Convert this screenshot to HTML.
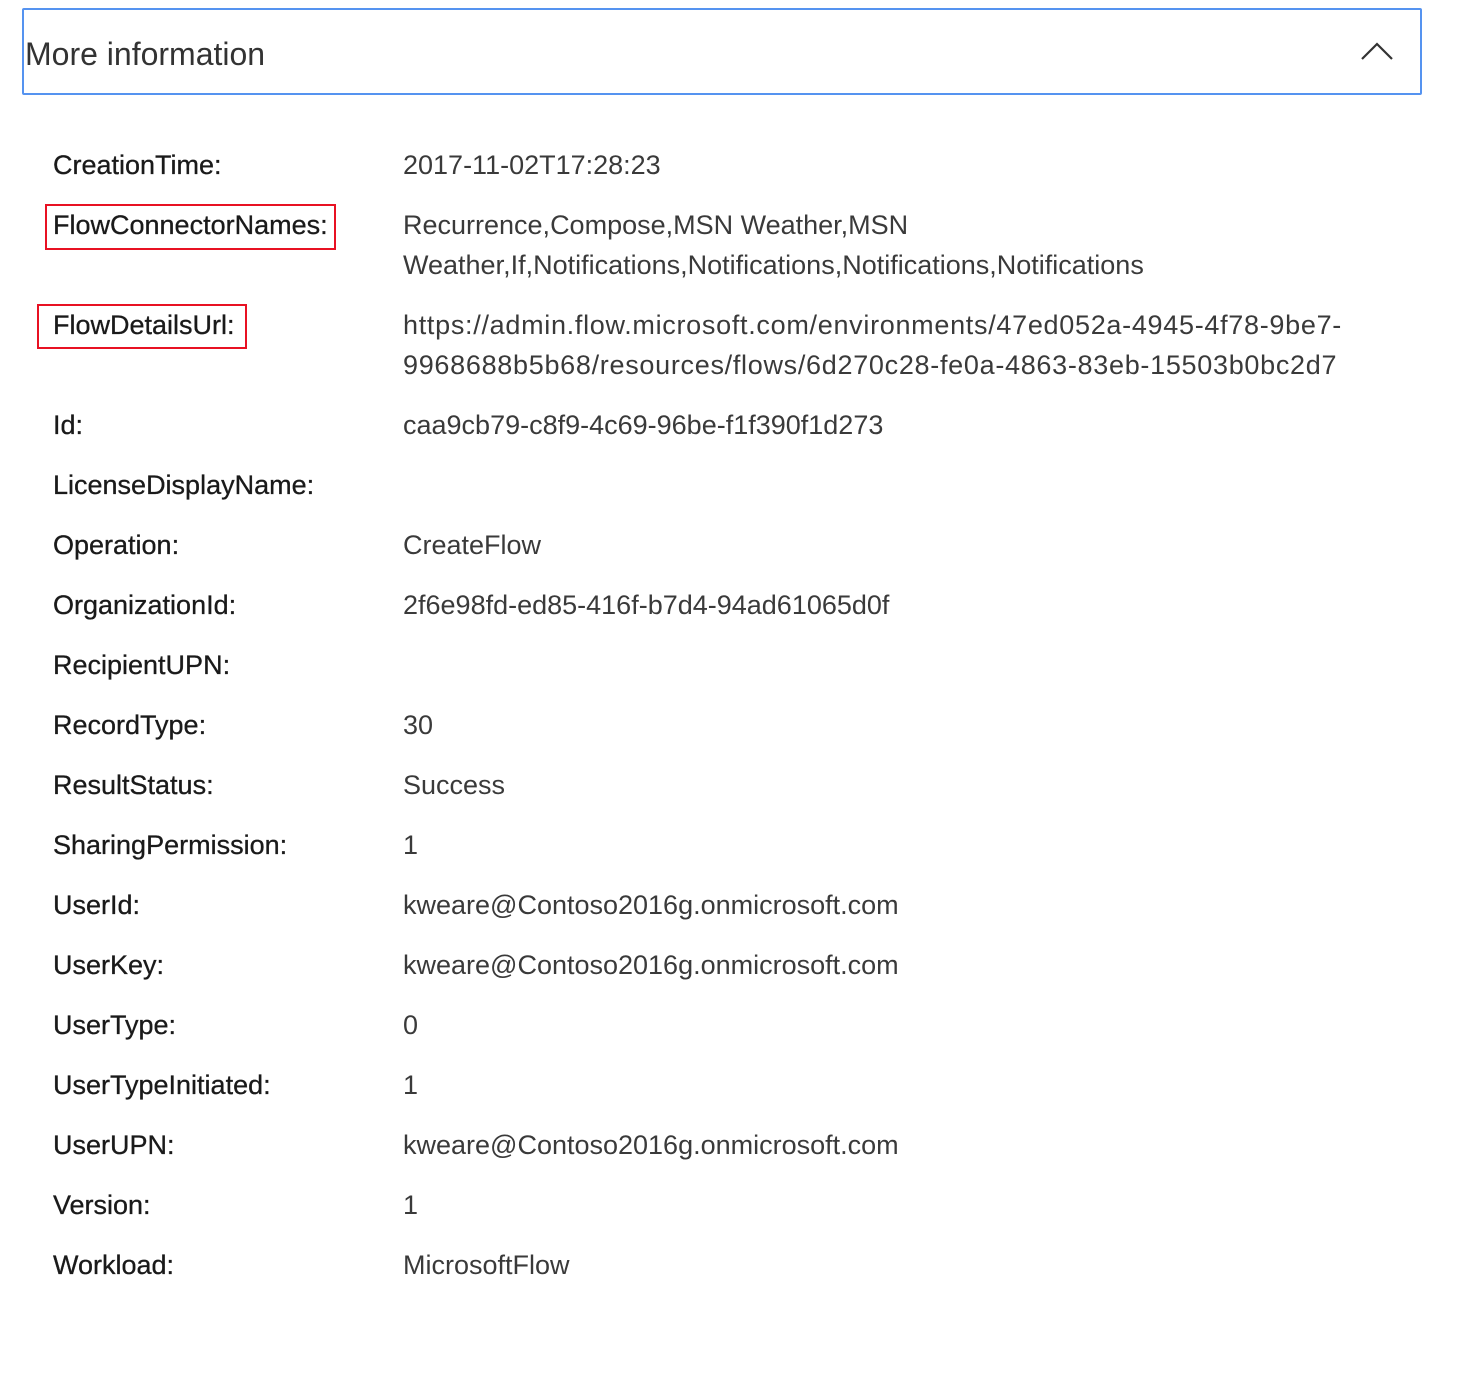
<!DOCTYPE html>
<html><head><meta charset="utf-8"><style>
html,body{margin:0;padding:0;background:#fff;width:1457px;height:1379px;overflow:hidden;position:relative;font-family:"Liberation Sans",sans-serif;}
.hdr{position:absolute;left:22px;top:8px;width:1396px;height:83px;border:2px solid #5593f0;border-radius:2px;}
.hdr span{position:absolute;left:1px;top:24px;font-size:32px;color:#333;line-height:40px;}
.r{position:absolute;line-height:40px;font-size:27px;white-space:nowrap;}
.l{left:53px;color:#1a1a1a;-webkit-text-stroke:0.3px #1a1a1a;}
.v{left:403px;color:#3a3a3a;}
.box{position:absolute;border:2.5px solid #e81123;}
</style></head><body>
<div class="hdr"><span>More information</span>
<svg style="position:absolute;left:1334px;top:30px" width="40" height="26"><polyline points="4,19 19,4 34,19" fill="none" stroke="#333" stroke-width="2.2"/></svg></div>
<div class="box" style="left:45px;top:204px;width:287px;height:42px"></div>
<div class="box" style="left:37px;top:304px;width:206px;height:41px"></div>
<div class="r l" style="top:145px">CreationTime:</div><div class="r v" style="top:145px">2017-11-02T17:28:23</div>
<div class="r l" style="top:205px">FlowConnectorNames:</div><div class="r v" style="top:205px">Recurrence,Compose,MSN Weather,MSN<br>Weather,If,Notifications,Notifications,Notifications,Notifications</div>
<div class="r l" style="top:305px">FlowDetailsUrl:</div><div class="r v" style="top:305px;letter-spacing:0.7px">https://admin.flow.microsoft.com/environments/47ed052a-4945-4f78-9be7-<br>9968688b5b68/resources/flows/6d270c28-fe0a-4863-83eb-15503b0bc2d7</div>
<div class="r l" style="top:405px">Id:</div><div class="r v" style="top:405px">caa9cb79-c8f9-4c69-96be-f1f390f1d273</div>
<div class="r l" style="top:465px">LicenseDisplayName:</div>
<div class="r l" style="top:525px">Operation:</div><div class="r v" style="top:525px">CreateFlow</div>
<div class="r l" style="top:585px">OrganizationId:</div><div class="r v" style="top:585px">2f6e98fd-ed85-416f-b7d4-94ad61065d0f</div>
<div class="r l" style="top:645px">RecipientUPN:</div>
<div class="r l" style="top:705px">RecordType:</div><div class="r v" style="top:705px">30</div>
<div class="r l" style="top:765px">ResultStatus:</div><div class="r v" style="top:765px">Success</div>
<div class="r l" style="top:825px">SharingPermission:</div><div class="r v" style="top:825px">1</div>
<div class="r l" style="top:885px">UserId:</div><div class="r v" style="top:885px">kweare@Contoso2016g.onmicrosoft.com</div>
<div class="r l" style="top:945px">UserKey:</div><div class="r v" style="top:945px">kweare@Contoso2016g.onmicrosoft.com</div>
<div class="r l" style="top:1005px">UserType:</div><div class="r v" style="top:1005px">0</div>
<div class="r l" style="top:1065px">UserTypeInitiated:</div><div class="r v" style="top:1065px">1</div>
<div class="r l" style="top:1125px">UserUPN:</div><div class="r v" style="top:1125px">kweare@Contoso2016g.onmicrosoft.com</div>
<div class="r l" style="top:1185px">Version:</div><div class="r v" style="top:1185px">1</div>
<div class="r l" style="top:1245px">Workload:</div><div class="r v" style="top:1245px">MicrosoftFlow</div>
</body></html>
